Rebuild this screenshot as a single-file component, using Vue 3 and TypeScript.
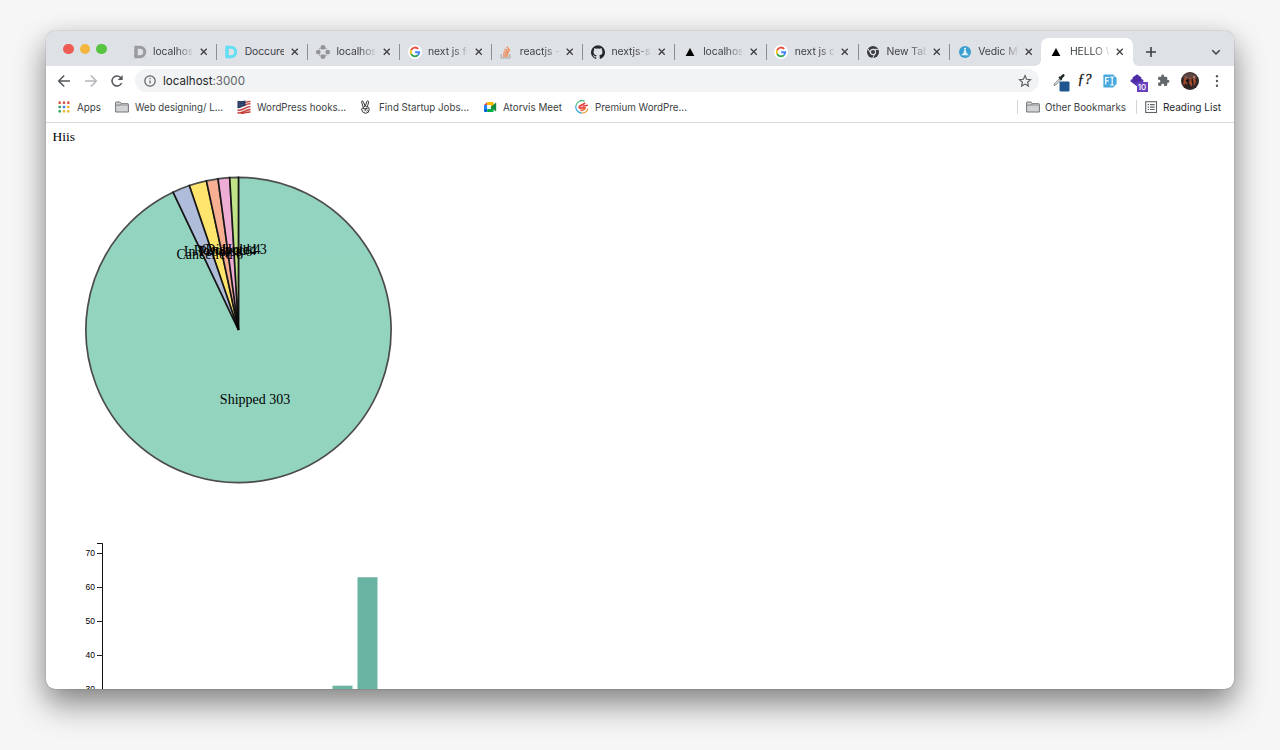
<script setup lang="ts">
interface Tab { icon: string; title: string }
interface Bookmark { icon: string; label: string; width: number; text: number }
interface Slice { label: string; value: number; color: string }

const tabs: Tab[] = [
  { icon: 'd-gray', title: 'localhost:3000' },
  { icon: 'd-cyan', title: 'Doccure' },
  { icon: 'nodes', title: 'localhost:8080' },
  { icon: 'google', title: 'next js fetch' },
  { icon: 'stack', title: 'reactjs - How' },
  { icon: 'github', title: 'nextjs-starter' },
  { icon: 'triangle', title: 'localhost:3000' },
  { icon: 'google', title: 'next js d3' },
  { icon: 'chrome', title: 'New Tab' },
  { icon: 'vedic', title: 'Vedic Maths' },
  { icon: 'triangle', title: 'HELLO WORLD' },
]

const bookmarks: Bookmark[] = [
  { icon: 'apps', label: 'Apps', width: 58, text: 24 },
  { icon: 'folder', label: 'Web designing/ L...', width: 122, text: 88 },
  { icon: 'flag', label: 'WordPress hooks...', width: 122, text: 89 },
  { icon: 'hand', label: 'Find Startup Jobs...', width: 124, text: 90 },
  { icon: 'meet', label: 'Atorvis Meet', width: 92, text: 59 },
  { icon: 'premium', label: 'Premium WordPre...', width: 130, text: 92 },
]

const slices: Slice[] = [
  { label: 'Shipped', value: 303, color: '#66c2a5' },
  { label: 'Cancelled', value: 6, color: '#8da0cb' },
  { label: 'In Process', value: 6, color: '#ffd92f' },
  { label: 'Resolved', value: 4, color: '#f58c66' },
  { label: 'On Hold', value: 4, color: '#e78ac3' },
  { label: 'Disputed', value: 3, color: '#a6d854' },
]

const radius = 152.6
const labelRadius = 76.2
const total = slices.reduce((sum, s) => sum + s.value, 0)
let angle = 0
const arcs = slices.map((s) => {
  const start = angle
  const end = start + (s.value / total) * Math.PI * 2
  angle = end
  const mid = (start + end) / 2
  const point = (a: number) => `${(Math.sin(a) * radius).toFixed(2)},${(-Math.cos(a) * radius).toFixed(2)}`
  return {
    ...s,
    path: `M${point(start)}A${radius},${radius} 0 ${end - start > Math.PI ? 1 : 0} 1 ${point(end)}L0,0Z`,
    x: Math.sin(mid) * labelRadius - 0.2,
    y: -Math.cos(mid) * labelRadius - 0.3,
  }
})

const ticks = [70, 60, 50, 40, 30]
const tickY = (v: number) => 10.5 + (70 - v) * 3.39
const bars = [
  { x: 286.5, value: 31 },
  { x: 311.5, value: 63 },
]
</script>

<template>
  <main class="desktop">
    <svg class="defs" width="0" height="0" aria-hidden="true">
      <symbol id="d-gray" viewBox="0 0 14 14"><path fill-rule="evenodd" d="M1.4 .8H7a6.2 6.2 0 0 1 0 12.4H1.4V8.2l3.2 2H7a3.2 3.2 0 0 0 0-6.4H4.6v3.9L1.4 7Z" fill="#9a9b9d" /><path d="M1.4 5h3.2v6.5H1.4Z" fill="#9a9b9d" /></symbol>
      <symbol id="d-cyan" viewBox="0 0 14 14"><path fill-rule="evenodd" d="M1.4 .8H7a6.2 6.2 0 0 1 0 12.4H1.4V8.2l3.2 2H7a3.2 3.2 0 0 0 0-6.4H4.6v3.9L1.4 7Z" fill="#62def2" /><path d="M1.4 5h3.2v6.5H1.4Z" fill="#62def2" /></symbol>
      <symbol id="nodes" viewBox="0 0 14 14">
        <g fill="#919396"><rect x="4.7" y=".3" width="4.6" height="4.1" rx="1.4" /><rect x="4.7" y="9.6" width="4.6" height="4.1" rx="1.4" /><rect x=".2" y="4.9" width="4.2" height="4.4" rx="1.4" /><rect x="9.6" y="4.9" width="4.2" height="4.4" rx="1.4" /></g>
        <path d="M3 4 5 3M9 3l2 1M3 10l2 1m4 0 2-1" stroke="#a6a8ab" stroke-width="1.2" />
      </symbol>
      <symbol id="google" viewBox="0 0 14 14">
        <circle cx="7" cy="7" r="7" fill="#fff" />
        <g fill="none" stroke-width="1.9">
          <path d="M10.2 3.9A4.3 4.3 0 0 0 3.2 5" stroke="#e34a3c" />
          <path d="M3.2 5a4.3 4.3 0 0 0 0 4" stroke="#f5bb16" />
          <path d="M3.2 9a4.3 4.3 0 0 0 6.6 1.3" stroke="#3aa757" />
          <path d="M9.8 10.3A4.3 4.3 0 0 0 11.2 7.2H7.1" stroke="#4285f4" />
        </g>
      </symbol>
      <symbol id="stack" viewBox="0 0 14 14">
        <path d="M2.2 9v4h8.6V9" fill="none" stroke="#aaa5a2" stroke-width="1.1" />
        <path d="M4 11h5.2M4 8.9l5.2.5M4.5 6.6l5 1.4M5.6 4.1l4.4 2.8M7.8 1.6l3 4.2" stroke="#ee8855" stroke-width="1.4" />
      </symbol>
      <symbol id="github" viewBox="0 0 16 16"><path fill="#24292e" d="M8 .3a8 8 0 0 0-2.5 15.6c.4.1.5-.2.5-.4v-1.4c-2.2.5-2.7-1-2.7-1-.4-.9-.9-1.2-.9-1.2-.7-.5.1-.5.1-.5.8.1 1.2.8 1.2.8.7 1.2 1.9.9 2.3.7.1-.5.3-.9.5-1.1-1.8-.2-3.6-.9-3.6-4 0-.8.3-1.6.8-2.1-.1-.2-.4-1 .1-2.1 0 0 .7-.2 2.2.8a7.5 7.5 0 0 1 4 0c1.5-1 2.2-.8 2.2-.8.5 1.1.2 1.9.1 2.1.5.5.8 1.3.8 2.1 0 3.1-1.9 3.8-3.7 4 .3.2.6.7.6 1.5v2.2c0 .2.1.5.5.4A8 8 0 0 0 8 .3Z" /></symbol>
      <symbol id="triangle" viewBox="0 0 14 14"><path d="M7 3 11.4 11H2.6Z" fill="#000" /></symbol>
      <symbol id="chrome" viewBox="0 0 14 14">
        <circle cx="7" cy="7" r="6" fill="#393b3e" />
        <circle cx="7" cy="7" r="2.6" fill="#393b3e" stroke="#dee1e6" stroke-width="1.1" />
        <path d="M7 4.4h5.6M4.7 8.3 1.9 3.6M9.3 8.3l-2.8 4.9" stroke="#dee1e6" stroke-width="1" />
      </symbol>
      <symbol id="vedic" viewBox="0 0 14 14">
        <circle cx="7" cy="7" r="6" fill="#3b9fcf" />
        <circle cx="7" cy="3.8" r="1.1" fill="#e6f5fb" /><path d="M6 5.2h2l.5 2.7 2 1.8v.6h-7v-.6l2-1.8Z" fill="#e6f5fb" />
      </symbol>
      <symbol id="apps" viewBox="0 0 14 14">
        <g fill="#d9493d"><rect x="1.5" y="1.5" width="2.4" height="2.4" /><rect x="5.8" y="1.5" width="2.4" height="2.4" /><rect x="10.1" y="1.5" width="2.4" height="2.4" /></g>
        <rect x="1.5" y="5.8" width="2.4" height="2.4" fill="#36a05c" /><rect x="5.8" y="5.8" width="2.4" height="2.4" fill="#3f7fe8" /><rect x="10.1" y="5.8" width="2.4" height="2.4" fill="#efb52c" />
        <rect x="1.5" y="10.1" width="2.4" height="2.4" fill="#36a05c" /><rect x="5.8" y="10.1" width="2.4" height="2.4" fill="#efb52c" /><rect x="10.1" y="10.1" width="2.4" height="2.4" fill="#efb52c" />
      </symbol>
      <symbol id="folder" viewBox="0 0 14 14">
        <path d="M.6 12V2.6Q.6 2 1.2 2h3.7l1.4 1.7h6.6q.5 0 .5.5V12Z" fill="#d2d3d4" stroke="#737578" />
        <path d="M1.2 5.1h4.2l.9-1.3" fill="none" stroke="#737578" stroke-width=".9" /><path d="M6 5.1h7.2" stroke="#8c8e90" stroke-width=".8" />
      </symbol>
      <symbol id="flag" viewBox="0 0 14 14">
        <path d="M.5.8c5 1 8-1 13-.4v12c-4-.6-8 2.5-13 .6Z" fill="#f5eeee" />
        <path d="M.5 10.4c5 .4 8-3.6 13-3.8M.5 13c5 .4 8-3.3 13-3.5M7 5.6c2-1 4-1.7 6.5-1.9M7 3c2-.9 4-1.6 6.5-1.7M4 13.7c3-.4 6-1.8 9.5-1.7" stroke="#c43b37" stroke-width="1.3" fill="none" />
        <path d="M.5.8c2.6.5 5 .2 8-.4v5C6 6 4 8 .5 8.3Z" fill="#263c63" />
        <path d="M2 2.5h5M2 4.5h5M2 6.3h3" stroke="#7888a4" stroke-width=".6" stroke-dasharray=".7 1" />
      </symbol>
      <symbol id="hand" viewBox="0 0 14 14">
        <path d="M4.2 7.2 2.6 2.2q-.2-1.1.7-1.2.7 0 1.1 1l1.8 4L7.8 1.5q.4-.9 1.2-.6.8.3.6 1.2L8.4 6.9q1.9.3 1.8 2.6-.1 3.8-3.6 3.8-2.9-.2-3.9-3.3-.4-1.6 1-1.9 1.3 0 2.4 1.6M6.1 6.2c-1.6.6-2 1.5-1.3 2.2.9.7 2-.3 3.5.1-1.6.5-2.2 1.4-2.1 2.6M8.4 6.9l-1.8-.4" fill="#f6f6f6" stroke="#2b2d2e" stroke-width=".95" />
        <path d="M7.3 11.8q1.5-.6 1.7-2.4" fill="none" stroke="#555" stroke-width=".7" />
      </symbol>
      <symbol id="meet" viewBox="0 0 14 14">
        <path d="M1 5 4.3 2v3Z" fill="#e94235" /><path d="M4.3 2h5.5q.8 0 .8.8V6l-3 1V5H4.3Z" fill="#ffba00" />
        <path d="M1 5h3.3v4H1Z" fill="#2684fc" /><path d="M1 9h3.3v3H2q-1 0-1-1Z" fill="#0066da" />
        <path d="M4.3 9h3.3V7l3-1v5.2q0 .8-.8.8H4.3Z" fill="#00ac47" /><path d="m7.6 7 4.8-4q.8-.4.8.4v7.2q0 .8-.8.4Z" fill="#188a3d" /><path d="M4.3 5h3.3v4H4.3Z" fill="#fff" />
      </symbol>
      <symbol id="premium" viewBox="0 0 14 14">
        <g fill="none" stroke-width="1.2"><path d="M9.6 1.1A6.2 6.2 0 0 0 1 5.5" stroke="#42bf78" /><path d="M1 5.5a6.2 6.2 0 0 0 5.8 7.7" stroke="#35a6dd" /><path d="M6.8 13.2Q11.8 13 13 8.4" stroke="#f39835" /></g>
        <path d="M10.2 2.9 4.4 6.4Q3.8 8 5.2 8.1l5-.5" fill="none" stroke="#e8413f" stroke-width="1.7" /><path d="M12.9 5.2 7.6 6.3" stroke="#e8413f" stroke-width="1.4" /><path d="M10 7.5q1 1.9-4.6 3.1" fill="none" stroke="#ed6835" stroke-width="1.7" />
      </symbol>
    </svg>

    <section class="window">
      <header class="tabstrip">
        <div class="lights"><i class="red" /><i class="amber" /><i class="green" /></div>
        <div class="tabs">
          <div v-for="(tab, i) in tabs" :key="i" class="tab" :class="{ active: i === 10, 'no-line': i >= 9 }">
            <svg class="favicon"><use :href="'#' + tab.icon" /></svg>
            <span class="title" :class="{ faded: i !== 1 }">{{ tab.title }}</span>
            <svg class="close" viewBox="0 0 8 8"><path d="m.8.8 6.4 6.4m0-6.4L.8 7.2" /></svg>
          </div>
        </div>
        <svg class="plus" viewBox="0 0 10 10"><path d="M5 0v10M0 5h10" /></svg>
        <svg class="chevron" viewBox="0 0 10 10"><path d="m1.2 3.2 3.8 3.7 3.8-3.7" /></svg>
      </header>

      <div class="toolbar">
        <svg class="nav" viewBox="0 0 14 14"><path d="M13 7H2m5.2-5.5L1.7 7l5.5 5.5" /></svg>
        <svg class="nav dim" viewBox="0 0 14 14"><path d="M1 7h11M6.8 1.5 12.3 7l-5.5 5.5" /></svg>
        <svg class="nav" viewBox="0 0 14 14"><path d="M11.6 9a5 5 0 1 1-1-5.5L12 5" /><path class="solid" d="M12.6 1v4.9H7.7Z" /></svg>
        <div class="address">
          <svg class="info" viewBox="0 0 12 12"><circle cx="6" cy="6" r="5.2" /><path d="M6 5.4v3.2M6 3.1v1.2" /></svg>
          <svg class="url" width="90" height="16"><text x="0" y="12" textLength="82" lengthAdjust="spacingAndGlyphs">localhost<tspan>:3000</tspan></text></svg>
          <svg class="star" viewBox="0 0 14 14"><path d="m7 1.6 1.6 3.6 3.9.4-2.9 2.6.8 3.9L7 10.1l-3.4 2 .8-3.9-2.9-2.6 3.9-.4Z" /></svg>
        </div>
        <div class="extensions">
          <svg viewBox="0 0 18 20" class="ext">
            <path d="M2 13.5 2.4 11.8l5-5 1.2 1.2-5 5Z" fill="#eef2f1" stroke="#56645f" stroke-width=".8" /><path d="m6.3 5.5 1.2-1 1 .1 1.9-2q1-1 1.9-.1.8 1-.2 1.9l-1.9 1.9v1l-1 1.2Z" fill="#1e2925" /><rect x="7.5" y="9.5" width="10" height="10" rx="1" fill="#20568f" />
          </svg>
          <span class="function">ƒ?</span>
          <svg viewBox="0 0 14 14" class="fi"><path d="M1 .5h9.2L13.6 4v6l-3.4 3.5H1q-.6 0-.6-.6V1.1Q.4.5 1 .5Z" fill="#48a9df" /><path d="M2.7 10.5v-7h3.6M2.7 6.8h3M7.2 3h1.3l.7.6.7-.6h1.2M7.2 11h1.3l.7-.6.7.6h1.2M9.2 3.6v6.8" fill="none" stroke="#fff" stroke-width="1.2" /></svg>
          <div class="layers">
            <svg viewBox="0 0 14 14"><path d="m7 .3 4.4 3.2v1.4L13.4 6v1.6L7 12.2.6 7.6V6l2-1.1V3.5Z" fill="#4c2ba5" /><path d="m.8 6.2 6.2 4 6.2-4" fill="none" stroke="#6a48c2" stroke-width=".7" /></svg>
            <b>10</b>
          </div>
          <svg viewBox="0 0 24 24" class="puzzle"><path d="M20.5 11H19V7a2 2 0 0 0-2-2h-4V3.5a2.5 2.5 0 0 0-5 0V5H4a2 2 0 0 0-2 2v3.8h1.5a2.7 2.7 0 0 1 0 5.4H2V20a2 2 0 0 0 2 2h3.8v-1.5a2.7 2.7 0 0 1 5.4 0V22H17a2 2 0 0 0 2-2v-4h1.5a2.5 2.5 0 0 0 0-5Z" fill="#63676b" /></svg>
          <svg viewBox="0 0 18 18" class="avatar">
            <circle cx="9" cy="9" r="9" fill="#352626" /><path d="M2 4q7-6 14 0l-1 3H3Z" fill="#5e4540" /><path d="m3 7 2-2 1 3 3-3 2 2 3-2 1 5-2 4-1-3-2 4-3-5-2 4-3-2Z" fill="#a24a2e" /><path d="m5 8 2 3 1-4m3 0 1 5M8 12l1 4M4 12l2 3" stroke="#211b1e" stroke-width="1.5" /><circle cx="13" cy="5" r="1.2" fill="#9c827b" /><circle cx="5" cy="5" r="1" fill="#8c6258" />
          </svg>
          <svg viewBox="0 0 4 14" class="menu"><circle cx="2" cy="2.3" r="1.2" /><circle cx="2" cy="7" r="1.2" /><circle cx="2" cy="11.7" r="1.2" /></svg>
        </div>
      </div>

      <nav class="bookmarks">
        <a v-for="b in bookmarks" :key="b.label" :style="{ width: b.width + 'px' }">
          <svg class="mark"><use :href="'#' + b.icon" /></svg>
          <svg class="label" :width="b.text" height="16"><text x="0" y="11.6" :textLength="b.text" lengthAdjust="spacingAndGlyphs">{{ b.label }}</text></svg>
        </a>
        <a class="other"><svg class="mark"><use href="#folder" /></svg><svg class="label" width="82" height="16"><text x="0" y="11.6" textLength="81" lengthAdjust="spacingAndGlyphs">Other Bookmarks</text></svg></a>
        <a class="reading">
          <svg class="mark" viewBox="0 0 14 14"><rect x="1.7" y="1.7" width="10.8" height="10.8" fill="none" stroke="#606468" stroke-width="1.1" /><path d="M3.7 4.7H5m1 0h4.7M3.7 7.1H5m1 0h4.7M3.7 9.5H5m1 0h4.7" stroke="#606468" stroke-width="1.2" /></svg>
          <svg class="label" width="59" height="16"><text x="0" y="11.6" textLength="58" lengthAdjust="spacingAndGlyphs">Reading List</text></svg>
        </a>
      </nav>

      <article class="page">
        <p>Hiis</p>
        <svg class="pie" width="360" height="378" viewBox="-192.5 -187 360 378">
          <path v-for="a in arcs" :key="a.label" :d="a.path" :fill="a.color" class="slice" />
          <text v-for="a in arcs" :key="a.label + a.value" :x="a.x" :y="a.y">{{ a.label }} {{ a.value }}</text>
        </svg>
        <svg class="bar-chart" width="400" height="146">
          <rect v-for="b in bars" :key="b.x" :x="b.x" :y="tickY(b.value)" width="20" height="300" fill="#69b3a2" />
          <path d="M51 .5h5.5V146" fill="none" stroke="#111" />
          <g v-for="t in ticks" :key="t">
            <path :d="`M51 ${Math.floor(tickY(t)) + 0.5}h5.5`" stroke="#222" />
            <text x="49" :y="tickY(t) + 2.9">{{ t }}</text>
          </g>
        </svg>
      </article>
    </section>
  </main>
</template>

<style>
body { background: #f6f6f6; }
</style>

<style scoped>
.desktop { box-sizing: border-box; width: 1280px; height: 750px; padding: 31px 46px 0; overflow: hidden; background: #f6f6f6; font-family: Inter, Roboto, sans-serif; }
.defs { position: absolute; }
.window { width: 1188px; height: 658px; overflow: hidden; display: flex; flex-direction: column; border-radius: 9px; background: #fff; box-shadow: 0 0 1px rgba(0, 0, 0, .55), 0 16px 32px rgba(0, 0, 0, .42), 0 4px 24px rgba(0, 0, 0, .1); }
.tabstrip { height: 35px; flex: none; display: flex; background: #dee1e6; }
.lights { width: 78.5px; padding: 12.5px 0 0 17px; box-sizing: border-box; display: flex; gap: 6px; }
.lights i { width: 10.5px; height: 10.5px; flex: none; border-radius: 50%; }
.red { background: #ee5c54; }
.amber { background: #f5b63d; }
.green { background: #58c440; }
.tabs { display: flex; padding-top: 7px; }
.tab { position: relative; width: 91.7px; height: 28px; box-sizing: border-box; display: flex; align-items: center; padding-left: 8px; color: #3f4246; }
.tab:not(.no-line)::after { content: ''; position: absolute; right: -.5px; top: 6px; width: 1px; height: 16px; background: #8b8e93; }
.favicon { width: 14px; height: 14px; flex: none; margin-right: 6.5px; }
.title { width: 39px; margin-right: 7.5px; overflow: hidden; white-space: nowrap; font-size: 10.4px; letter-spacing: -.08px; line-height: 16px; }
.title.faded { mask-image: linear-gradient(90deg, #000 60%, rgba(0, 0, 0, .15) 100%); }
.close { width: 7.5px; height: 7.5px; fill: none; stroke: #3c3f42; stroke-width: 1.4; }
.active { background: #fff; border-radius: 7px 7px 0 0; }
.active::before, .active::after { content: ''; position: absolute; bottom: 0; width: 6px; height: 6px; }
.active::before { left: -6px; background: radial-gradient(circle at 0 0, transparent 5.7px, #fff 6px); }
.active.tab::after { right: -6px; background: radial-gradient(circle at 100% 0, transparent 5.7px, #fff 6px); }
.plus { width: 10px; height: 10px; margin: 16px 0 0 13px; stroke: #3b3e42; stroke-width: 1.6; }
.chevron { width: 10px; height: 10px; margin: 15.5px 13.5px 0 auto; fill: none; stroke: #484b4f; stroke-width: 1.6; }
.toolbar { height: 29px; flex: none; display: flex; align-items: center; padding-left: 11px; }
.nav { width: 14px; height: 14px; margin-right: 12.5px; flex: none; fill: none; stroke: #55595d; stroke-width: 1.55; }
.nav.dim { stroke: #b5b7ba; }
.solid { fill: #55595d; stroke: none; }
.address { width: 904px; height: 23px; flex: none; margin-left: -1.5px; display: flex; align-items: center; box-sizing: border-box; padding: 0 7.5px 0 9px; border-radius: 12px; background: #f1f3f4; }
.info { width: 12px; height: 12px; fill: none; stroke: #5c6064; stroke-width: 1.2; }
.url { margin-left: 7.3px; font-size: 12px; fill: #242629; }
.url tspan { fill: #606468; }
.star { width: 14px; height: 14px; margin-left: auto; fill: none; stroke: #595d61; stroke-width: 1.15; }
.extensions { flex: 1; display: flex; align-items: center; }
.ext { width: 18px; height: 20px; margin: 3px 0 0 12.5px; }
.function { width: 18px; margin: -2px 0 0 8px; font: italic 14px/20px "Liberation Serif", serif; color: #111; white-space: nowrap; -webkit-text-stroke: .3px #111; }
.fi { width: 14px; height: 14px; margin-left: 7.5px; }
.layers { position: relative; width: 18px; height: 20px; margin-left: 12.5px; }
.layers svg { width: 14px; height: 14px; margin-top: 3px; }
.layers b { position: absolute; left: 7px; top: 11px; width: 11px; height: 10px; background: #6940bd; color: #fff; font: 500 8px/10px Inter, sans-serif; text-align: center; }
.puzzle { width: 13px; height: 13px; margin-left: 9px; }
.avatar { width: 18px; height: 18px; margin-left: 11px; }
.menu { width: 4px; height: 14px; margin-left: 16px; fill: #54585c; }
.bookmarks { height: 28px; flex: none; box-sizing: border-box; display: flex; align-items: center; padding: 0 0 3px 11px; border-bottom: 1px solid #d9dadb; }
.bookmarks a { display: flex; align-items: center; height: 16px; }
.mark { width: 14px; height: 14px; flex: none; margin-right: 5.7px; }
.label { overflow: visible; fill: #3c3f43; font-size: 10.6px; }
.bookmarks .other { width: 118.5px; margin-left: auto; padding-left: 7.5px; box-sizing: border-box; border-left: 1px solid #d2d4d6; height: 14px; }
.bookmarks .other .mark { margin-right: 5px; }
.bookmarks .reading { width: 98.5px; box-sizing: border-box; padding-left: 7.5px; border-left: 1px solid #d2d4d6; height: 14px; }
.reading .mark { margin-right: 5px; }
.reading .label { fill: #25282b; }
.page { flex: 1; min-height: 0; overflow: hidden; font-family: "Liberation Serif", serif; color: #000; }
.page p { height: 20px; margin: 0; padding: 4px 0 0 6.5px; box-sizing: border-box; font-size: 13.5px; line-height: 20px; }
.pie { display: block; font-size: 14px; text-anchor: middle; }
.slice { stroke: #000; stroke-width: 1.7; opacity: .7; }
.bar-chart { display: block; margin-top: 22px; font: 8.5px "Liberation Sans", sans-serif; text-anchor: end; }
</style>
